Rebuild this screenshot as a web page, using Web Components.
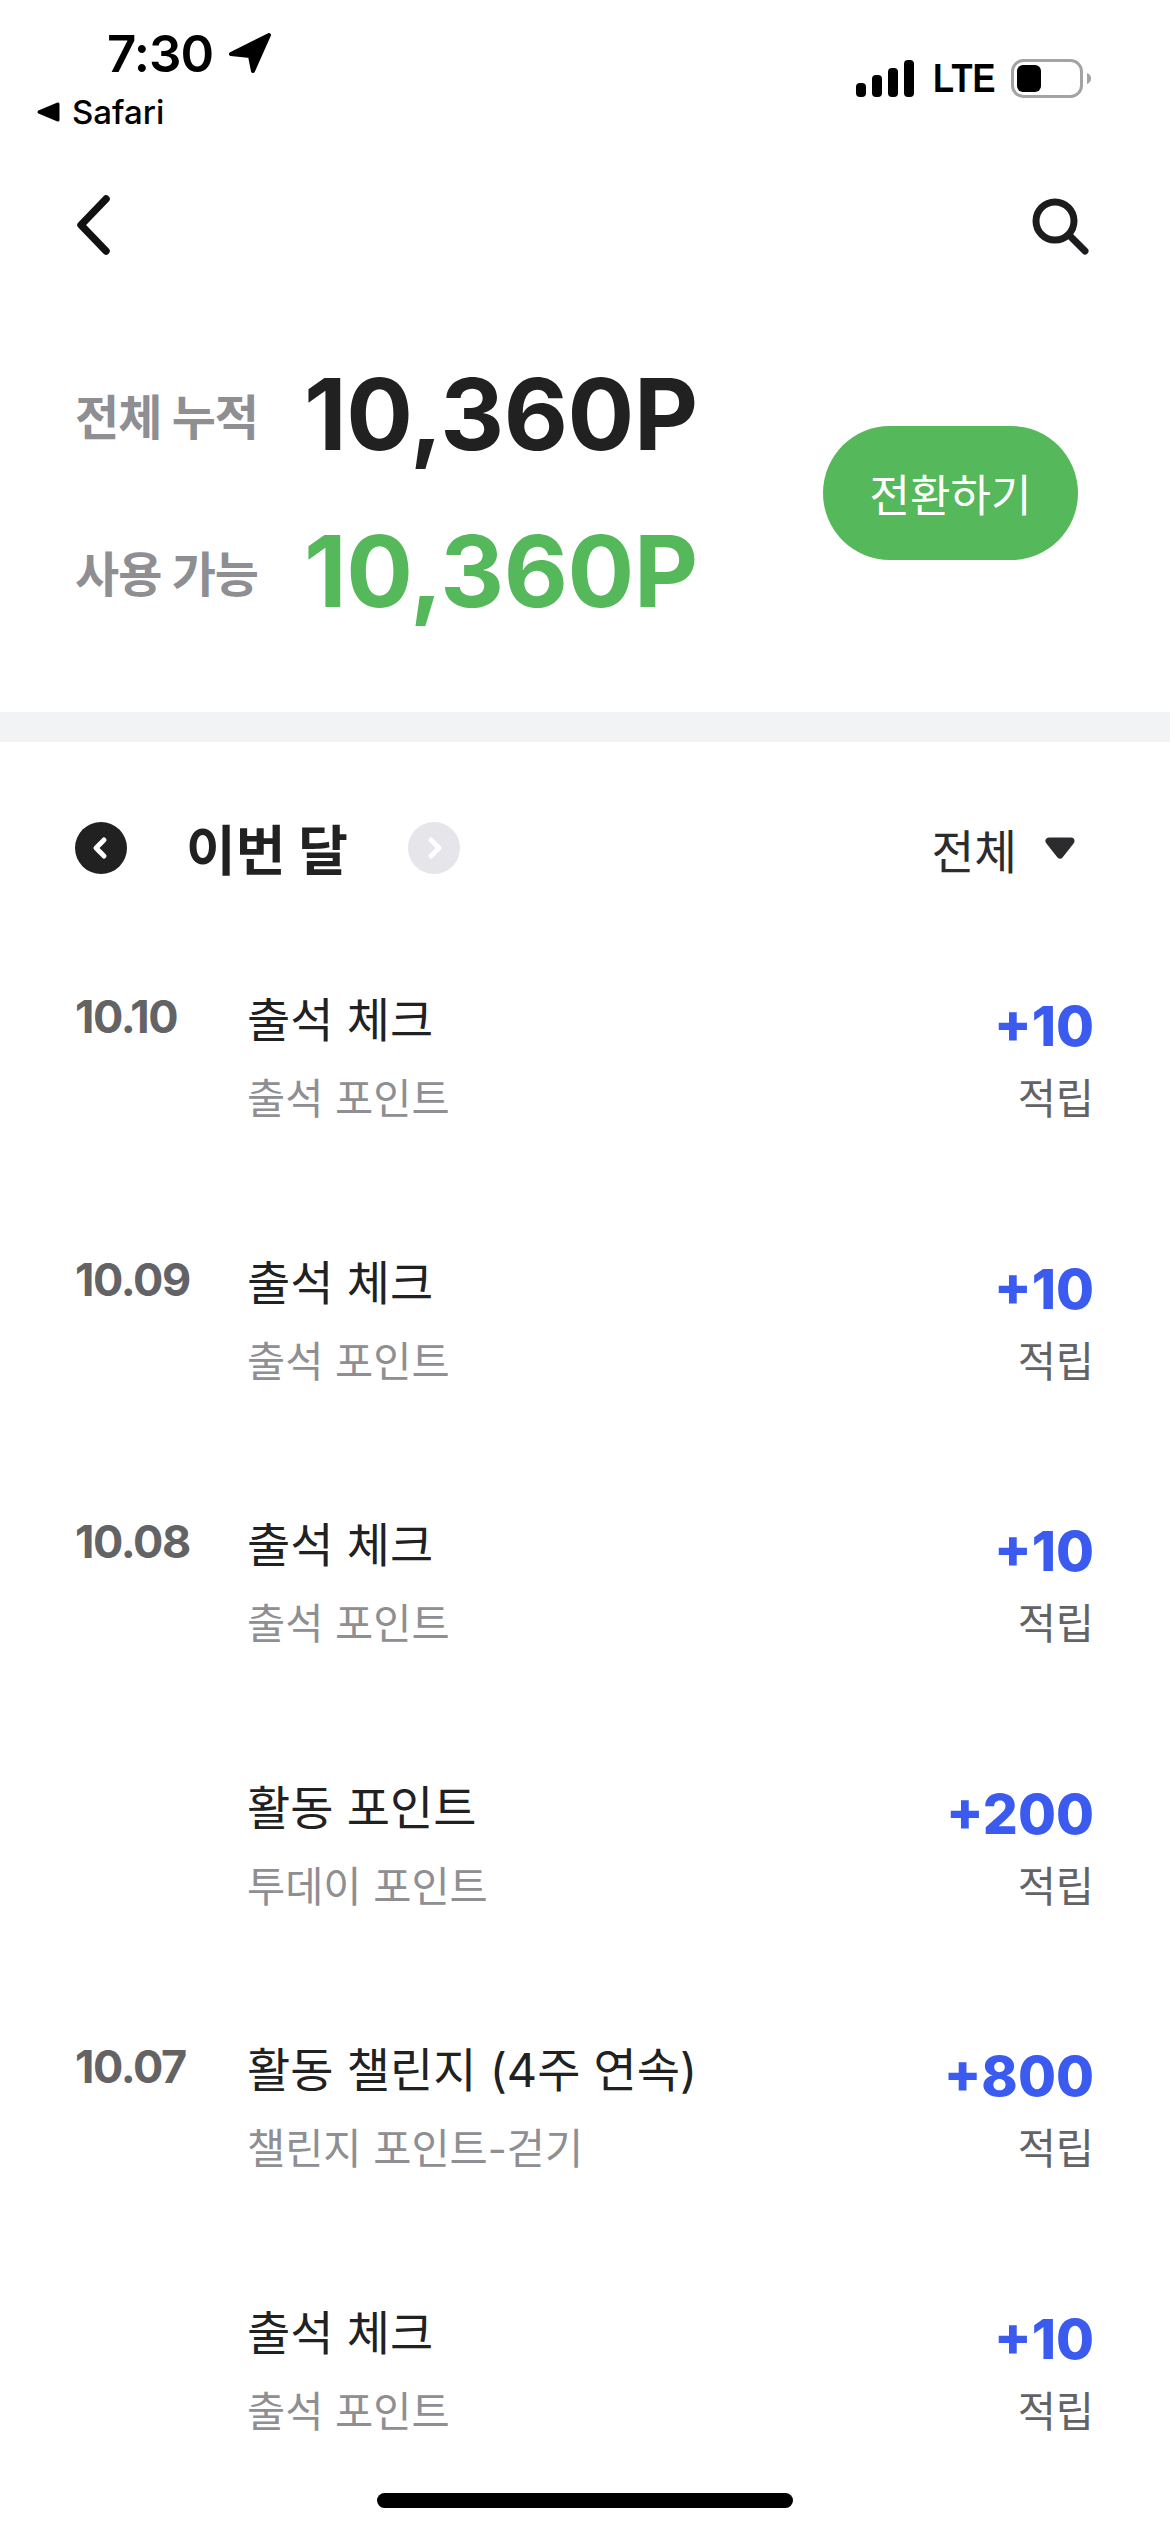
<!doctype html>
<html lang="ko">
<head>
<meta charset="UTF-8">
<title>포인트 내역</title>
<style>
  html, body { margin: 0; background: #fff; }
  body { width: 1170px; height: 2532px; overflow: hidden; position: relative; font-family: Inter, "Noto Sans CJK KR", sans-serif; }
</style>
</head>
<body>

<status-bar></status-bar>
<nav-bar></nav-bar>
<point-summary total="10,360P" usable="10,360P"></point-summary>
<month-bar></month-bar>

<point-row>
  <span slot="date">10.10</span><span slot="title">출석 체크</span><span slot="sub">출석 포인트</span><span slot="amount">+10</span><span slot="kind">적립</span>
</point-row>
<point-row>
  <span slot="date">10.09</span><span slot="title">출석 체크</span><span slot="sub">출석 포인트</span><span slot="amount">+10</span><span slot="kind">적립</span>
</point-row>
<point-row>
  <span slot="date">10.08</span><span slot="title">출석 체크</span><span slot="sub">출석 포인트</span><span slot="amount">+10</span><span slot="kind">적립</span>
</point-row>
<point-row>
  <span slot="title">활동 포인트</span><span slot="sub">투데이 포인트</span><span slot="amount">+200</span><span slot="kind">적립</span>
</point-row>
<point-row>
  <span slot="date">10.07</span><span slot="title">활동 챌린지 (4주 연속)</span><span slot="sub">챌린지 포인트-걷기</span><span slot="amount">+800</span><span slot="kind">적립</span>
</point-row>
<point-row>
  <span slot="title">출석 체크</span><span slot="sub">출석 포인트</span><span slot="amount">+10</span><span slot="kind">적립</span>
</point-row>

<home-indicator></home-indicator>

<script>
function shadow(el, html) {
  el.attachShadow({mode: 'open'}).innerHTML = html;
}

customElements.define('status-bar', class extends HTMLElement {
  constructor() {
    super();
    shadow(this, `<style>
      :host { display: flex; justify-content: space-between; height: 156px; font-family: Inter, sans-serif; color: #000; }
      .left { padding: 24px 0 0 37px; }
      .time { display: flex; align-items: center; height: 58px; padding-left: 70px; font-size: 51px; font-weight: 600; letter-spacing: -1px; }
      .time svg { margin-left: 15px; }
      .app { display: flex; align-items: center; height: 36px; margin-top: 12px; font-size: 33px; font-weight: 500; }
      .app svg { margin-right: 12px; }
      .right { display: flex; align-items: center; height: 40px; margin: 58px 79px 0 0; }
      .lte { font-family: "Liberation Sans", sans-serif; font-size: 40px; font-weight: 700; transform: scaleX(.86); transform-origin: left; width: 58px; margin: 0 20px 0 19px; }
    </style>
    <div class="left">
      <div class="time">7:30
        <svg width="44" height="40" viewBox="0 0 44 40"><path d="M41 2 L3 21 L22 23 L25 38 Z" fill="#000" stroke="#000" stroke-width="4" stroke-linejoin="round"/></svg>
      </div>
      <div class="app">
        <svg width="23" height="20" viewBox="0 0 23 20"><path d="M2 10 L21 2 V18 Z" fill="#000" stroke="#000" stroke-width="3" stroke-linejoin="round"/></svg>
        Safari
      </div>
    </div>
    <div class="right">
      <svg width="58" height="37" viewBox="0 0 58 37" fill="#000">
        <rect x="0" y="23" width="10" height="14" rx="4"/><rect x="16" y="15" width="10" height="22" rx="4"/>
        <rect x="32" y="8" width="10" height="29" rx="4"/><rect x="48" y="0" width="10" height="37" rx="4"/>
      </svg>
      <span class="lte">LTE</span>
      <svg width="80" height="39" viewBox="0 0 80 39">
        <rect x="1.5" y="1.5" width="69" height="36" rx="11" fill="#fff" stroke="#a3a3a3" stroke-width="3"/>
        <rect x="6" y="6" width="24" height="27" rx="6" fill="#000"/>
        <path d="M76 14 C79 15 80 17 80 19.500 C80 22 79 24 76 25 Z" fill="#a3a3a3"/>
      </svg>
    </div>`);
  }
});

customElements.define('nav-bar', class extends HTMLElement {
  constructor() {
    super();
    shadow(this, `<style>
      :host { display: flex; justify-content: space-between; align-items: center; height: 140px; padding: 0 80px 0 74px; box-sizing: border-box; }
      svg { display: block; }
    </style>
    <svg width="40" height="64" viewBox="0 0 40 64" style="margin-top:-1px"><path d="M32 5 L7 31 L32 57" fill="none" stroke="#111" stroke-width="7.500" stroke-linecap="round" stroke-linejoin="round"/></svg>
    <svg width="60" height="60" viewBox="0 0 60 60"><circle cx="25" cy="25" r="19" fill="none" stroke="#1c1c1e" stroke-width="7"/><path d="M39 39 L55 55" stroke="#1c1c1e" stroke-width="7" stroke-linecap="round"/></svg>`);
  }
});

customElements.define('point-summary', class extends HTMLElement {
  constructor() {
    super();
    const total = this.getAttribute('total'), usable = this.getAttribute('usable');
    shadow(this, `<style>
      :host { display: flex; justify-content: space-between; align-items: center; box-sizing: border-box; height: 416px; padding: 40px 92px 62px 75px; font-family: Inter, "Noto Sans CJK KR", sans-serif; }
      .row { display: flex; align-items: center; height: 157px; }
      .label { width: 229px; font-size: 48px; font-weight: 700; color: #8e8e93; letter-spacing: -1px; margin-top: -2px; }
      .num { font-size: 99px; font-weight: 700; letter-spacing: -.4px; color: #212121; line-height: 1; }
      .usable .num { color: #55b85a; }
      button { width: 255px; height: 134px; border: 0; border-radius: 67px; background: #55b85a; color: #fff; font: 400 44px Inter, "Noto Sans CJK KR", sans-serif; padding: 0; }
    </style>
    <div>
      <div class="row"><span class="label">전체 누적</span><span class="num">${total}</span></div>
      <div class="row usable"><span class="label">사용 가능</span><span class="num">${usable}</span></div>
    </div>
    <button>전환하기</button>`);
  }
});

customElements.define('month-bar', class extends HTMLElement {
  constructor() {
    super();
    shadow(this, `<style>
      :host { display: flex; align-items: center; box-sizing: border-box; height: 242px; padding: 0 94px 0 75px; border-top: 30px solid #f2f3f5; font-family: Inter, "Noto Sans CJK KR", sans-serif; color: #212121; }
      svg { display: block; flex: none; }
      .name { width: 281px; padding-left: 59px; box-sizing: border-box; font-size: 54px; font-weight: 700; margin-top: -2px; }
      .filter { margin-left: auto; display: flex; align-items: center; gap: 27px; font-size: 46.500px; color: #2c2c2e; }
    </style>
    <svg width="52" height="52" viewBox="0 0 52 52"><circle cx="26" cy="26" r="26" fill="#212121"/><path d="M29 18 L21 26 L29 34" fill="none" stroke="#fff" stroke-width="5" stroke-linecap="round" stroke-linejoin="round"/></svg>
    <span class="name">이번 달</span>
    <svg width="52" height="52" viewBox="0 0 52 52"><circle cx="26" cy="26" r="26" fill="#e5e5ea"/><path d="M23 18 L31 26 L23 34" fill="none" stroke="#fff" stroke-width="5" stroke-linecap="round" stroke-linejoin="round"/></svg>
    <span class="filter">전체
      <svg width="32" height="22" viewBox="0 0 32 22"><path d="M5 4 H27 L16 18 Z" fill="#2c2c2e" stroke="#2c2c2e" stroke-width="7" stroke-linejoin="round"/></svg>
    </span>`);
  }
});

customElements.define('point-row', class extends HTMLElement {
  constructor() {
    super();
    shadow(this, `<style>
      :host { display: grid; grid-template-columns: 172px 1fr auto; box-sizing: border-box; height: 262.600px; padding: 36px 76px 0 75px; font-family: Inter, "Noto Sans CJK KR", sans-serif; }
      .date { font-size: 45px; font-weight: 700; line-height: 60px; color: #636366; letter-spacing: -1.4px; margin-top: -3px; }
      .title { font-size: 47px; line-height: 60px; color: #212121; white-space: nowrap; }
      .sub { font-size: 41.500px; line-height: 60px; color: #8e8e93; margin-top: 19px; white-space: nowrap; }
      .right { text-align: right; }
      .amount { font-size: 55px; font-weight: 800; line-height: 60px; color: #3b5bf0; margin-top: 6px; }
      .kind { font-size: 41.500px; line-height: 60px; color: #636366; margin-top: 13px; }
    </style>
    <div class="date"><slot name="date"></slot></div>
    <div>
      <div class="title"><slot name="title"></slot></div>
      <div class="sub"><slot name="sub"></slot></div>
    </div>
    <div class="right">
      <div class="amount"><slot name="amount"></slot></div>
      <div class="kind"><slot name="kind"></slot></div>
    </div>`);
  }
});

customElements.define('home-indicator', class extends HTMLElement {
  constructor() {
    super();
    shadow(this, `<style>
      :host { display: block; position: absolute; left: 377px; top: 2493px; width: 416px; height: 15px; border-radius: 8px; background: #000; }
    </style>`);
  }
});
</script>
</body>
</html>
